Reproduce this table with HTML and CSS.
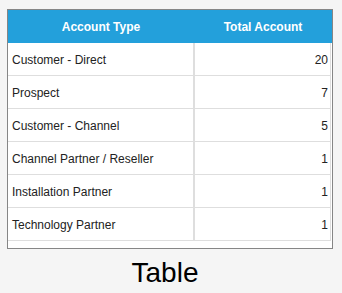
FILE: index.html
```html
<!DOCTYPE html>
<html>
<head>
<meta charset="utf-8">
<link rel="stylesheet" href="styles.css">
</head>
<body>
<div class="page">
  <div class="box">
    <div class="head">
      <div class="hcell">Account Type</div>
      <div class="hcell">Total Account</div>
    </div>
    <div class="rows">
      <div class="row"><div class="c1">Customer - Direct</div><div class="c2">20</div></div>
      <div class="row"><div class="c1">Prospect</div><div class="c2">7</div></div>
      <div class="row"><div class="c1">Customer - Channel</div><div class="c2">5</div></div>
      <div class="row"><div class="c1">Channel Partner / Reseller</div><div class="c2">1</div></div>
      <div class="row"><div class="c1">Installation Partner</div><div class="c2">1</div></div>
      <div class="row"><div class="c1">Technology Partner</div><div class="c2">1</div></div>
    </div>
  </div>
  <div class="caption">Table</div>
</div>
</body>
</html>
```
FILE: styles.css
```css
html, body {
  margin: 0;
  padding: 0;
  background: #f5f5f5;
}
body {
  font-family: "Liberation Sans", Arial, sans-serif;
  color: #222;
}
.page {
  padding: 9px 0 0 7px;
  width: 326px;
  display: flex;
  flex-direction: column;
}
.box {
  border: 1px solid #868686;
  background: #fff;
  width: 324px;
  height: 238px;
  box-sizing: content-box;
}
.head {
  display: grid;
  grid-template-columns: 186px 138px;
  height: 33px;
  background: #23a0db;
}
.hcell {
  color: #fff;
  font-weight: bold;
  font-size: 12px;
  display: flex;
  align-items: center;
  justify-content: center;
}
.rows {
  width: 323px;
}
.row {
  display: grid;
  grid-template-columns: 186px 137px;
  height: 33px;
}
.c1, .c2 {
  font-size: 12px;
  display: flex;
  align-items: center;
  border-bottom: 1px solid #dedede;
  box-sizing: border-box;
  padding-top: 1px;
}
.c1 {
  border-right: 1px solid #dedede;
  padding-left: 4px;
}
.c2 {
  border-left: 1px solid #dedede;
  border-right: 1px solid #dedede;
  justify-content: flex-end;
  padding-right: 2px;
}
.caption {
  font-size: 28px;
  color: #000;
  text-align: center;
  margin-top: 8px;
  line-height: 32px;
  padding-right: 10px;
}
```
